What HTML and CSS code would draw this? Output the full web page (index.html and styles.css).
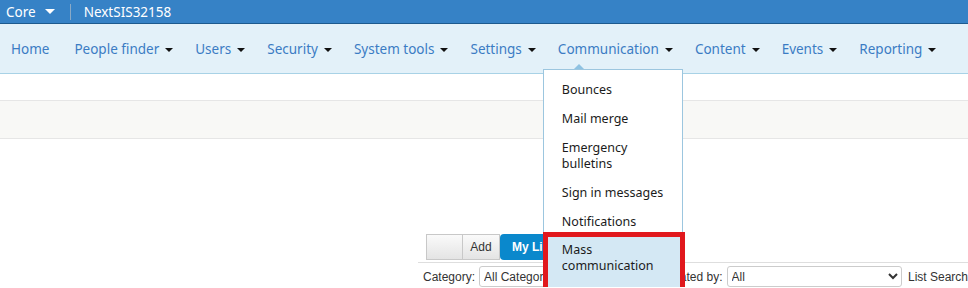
FILE: index.html
```html
<!DOCTYPE html>
<html lang="en">
<head>
  <meta charset="UTF-8">
  <title>Core - NextSIS32158</title>
  <link rel="stylesheet" href="styles.css">
</head>
<body>
  <!-- Top bar -->
  <div class="topbar">
    <span class="brand">Core <b class="caret-white"></b></span>
    <span class="divider"></span>
    <span class="site">NextSIS32158</span>
  </div>

  <!-- Main navigation -->
  <nav class="mainnav">
    <ul class="nav-list">
      <li class="nav-item home"><a href="#">Home</a></li>
      <li class="nav-item"><a href="#">People finder <b class="caret"></b></a></li>
      <li class="nav-item"><a href="#">Users <b class="caret"></b></a></li>
      <li class="nav-item"><a href="#">Security <b class="caret"></b></a></li>
      <li class="nav-item"><a href="#">System tools <b class="caret"></b></a></li>
      <li class="nav-item"><a href="#">Settings <b class="caret"></b></a></li>
      <li class="nav-item open">
        <a href="#">Communication <b class="caret"></b></a>
        <ul class="dropdown">
          <li><a href="#">Bounces</a></li>
          <li><a href="#">Mail merge</a></li>
          <li><a href="#">Emergency bulletins</a></li>
          <li><a href="#">Sign in messages</a></li>
          <li><a href="#">Notifications</a></li>
          <li class="active"><a href="#">Mass communication</a></li>
        </ul>
      </li>
      <li class="nav-item"><a href="#">Content <b class="caret"></b></a></li>
      <li class="nav-item"><a href="#">Events <b class="caret"></b></a></li>
      <li class="nav-item"><a href="#">Reporting <b class="caret"></b></a></li>
    </ul>
  </nav>

  <div class="spacer"></div>
  <div class="band"></div>

  <!-- Lists -->
  <div class="list-area">
    <div class="toolbar">
      <div class="btn-group">
        <button class="btn"></button>
        <button class="btn">Add</button>
      </div>
      <div class="tabs">
        <a href="#" class="tab active">My Lists</a>
        <a href="#" class="tab">List Admin</a>
      </div>
    </div>
    <div class="filters">
      <label class="filter-label">Category:</label>
      <select class="filter-select"><option>All Categories</option></select>
      <label class="filter-label">Created by:</label>
      <select class="filter-select"><option>All</option></select>
      <label class="filter-label">List Search</label>
    </div>
  </div>
</body>
</html>
```

FILE: styles.css
```css
  html, body {
    margin: 0;
    padding: 0;
    overflow: hidden;
  }

  body {
    font-family: "Noto Sans", "Open Sans", sans-serif;
    background: #fff;
    color: #222;
  }

  a {
    text-decoration: none;
  }

  /* Top bar */
  .topbar {
    display: flex;
    align-items: center;
    height: 23px;
    background-color: #3682c6;
    border-bottom: 1px solid #1d5a8e;
    color: #fff;
    font-size: 13.5px;
  }

  .brand {
    display: flex;
    align-items: center;
    padding-left: 6px;
  }

  .caret-white {
    display: inline-block;
    margin-left: 9px;
    border-top: 5px solid #fff;
    border-left: 5px solid transparent;
    border-right: 5px solid transparent;
  }

  .divider {
    flex: none;
    width: 1px;
    height: 16px;
    margin-left: 15px;
    margin-right: 13px;
    background-color: #8aa9c6;
  }

  /* Main navigation */
  .mainnav {
    background-color: #e3f1f9;
    border-bottom: 1px solid #a8d2e6;
    height: 49px;
  }

  .nav-list {
    display: flex;
    list-style: none;
    margin: 0;
    padding: 0;
    height: 49px;
  }

  .nav-item {
    position: relative;
    display: flex;
    align-items: center;
    white-space: nowrap;
  }

  .nav-item > a {
    display: flex;
    align-items: center;
    padding: 0 11px;
    color: #3b7cc4;
    font-size: 13.5px;
    height: 49px;
  }

  .nav-item.home > a {
    padding-right: 14px;
  }

  .caret {
    display: inline-block;
    margin-left: 6px;
    margin-top: 3px;
    border-top: 4px solid #111;
    border-left: 4px solid transparent;
    border-right: 4px solid transparent;
  }

  /* Dropdown */
  .dropdown {
    position: absolute;
    top: 45px;
    left: -4px;
    width: 108px;
    margin: 0;
    padding: 5px 12px 0 18px;
    list-style: none;
    background: #fff;
    border: 1px solid #9cc6df;
    border-bottom: none;
    height: 240px;
    z-index: 10;
    white-space: normal;
  }

  .dropdown::before {
    content: "";
    position: absolute;
    top: -6px;
    left: 30px;
    border-bottom: 5px solid #8ec2e2;
    border-left: 5px solid transparent;
    border-right: 5px solid transparent;
  }

  .dropdown li a {
    display: block;
    padding: 6.5px 0;
    font-size: 12.5px;
    line-height: 16px;
    color: #1b1b1b;
  }

  .dropdown li.active {
    margin: -4px -15px 0 -19px;
    border: 5px solid #e1181d;
    background-color: #d4e8f4;
    height: 60px;
  }

  .dropdown li.active a {
    padding: 5px 0 0 14px;
    width: 100px;
  }

  /* Page */
  .spacer {
    height: 26px;
  }

  .band {
    height: 37px;
    background-color: #f8f8f6;
    border-top: 1px solid #e6e6e6;
    border-bottom: 1px solid #e6e6e6;
  }

  .list-area {
    margin: 95px 0 0 418px;
    font-family: "Liberation Sans", Arial, sans-serif;
    font-size: 12px;
  }

  .toolbar {
    display: flex;
    align-items: center;
    padding: 0 0 2px 8px;
    border-bottom: 1px solid #dedede;
  }

  .btn-group {
    display: flex;
  }

  .btn {
    width: 37px;
    height: 26px;
    padding: 0;
    font-family: "Liberation Sans", Arial, sans-serif;
    font-size: 12px;
    color: #333;
    background: linear-gradient(#fafafa, #e4e4e4);
    border: 1px solid #c8c8c8;
  }

  .btn + .btn {
    border-left: none;
  }

  .tabs {
    display: flex;
    align-items: center;
  }

  .tab {
    display: flex;
    align-items: center;
    height: 26px;
    padding: 0 12px;
    color: #1b8bd6;
  }

  .tab.active {
    background-color: #0a88cc;
    color: #fff;
    font-weight: bold;
    border-radius: 4px 0 0 4px;
    margin-right: 2px;
  }

  .filters {
    display: flex;
    align-items: center;
    padding: 3px 0 0 5px;
    white-space: nowrap;
  }

  .filter-label {
    color: #333;
  }

  .filter-select {
    width: 178px;
    height: 21px;
    margin: 0 6px 0 4px;
    font-family: "Liberation Sans", Arial, sans-serif;
    font-size: 12px;
    color: #333;
    border: 1px solid #ccc;
    border-radius: 3px;
    background: #fff;
  }
```
